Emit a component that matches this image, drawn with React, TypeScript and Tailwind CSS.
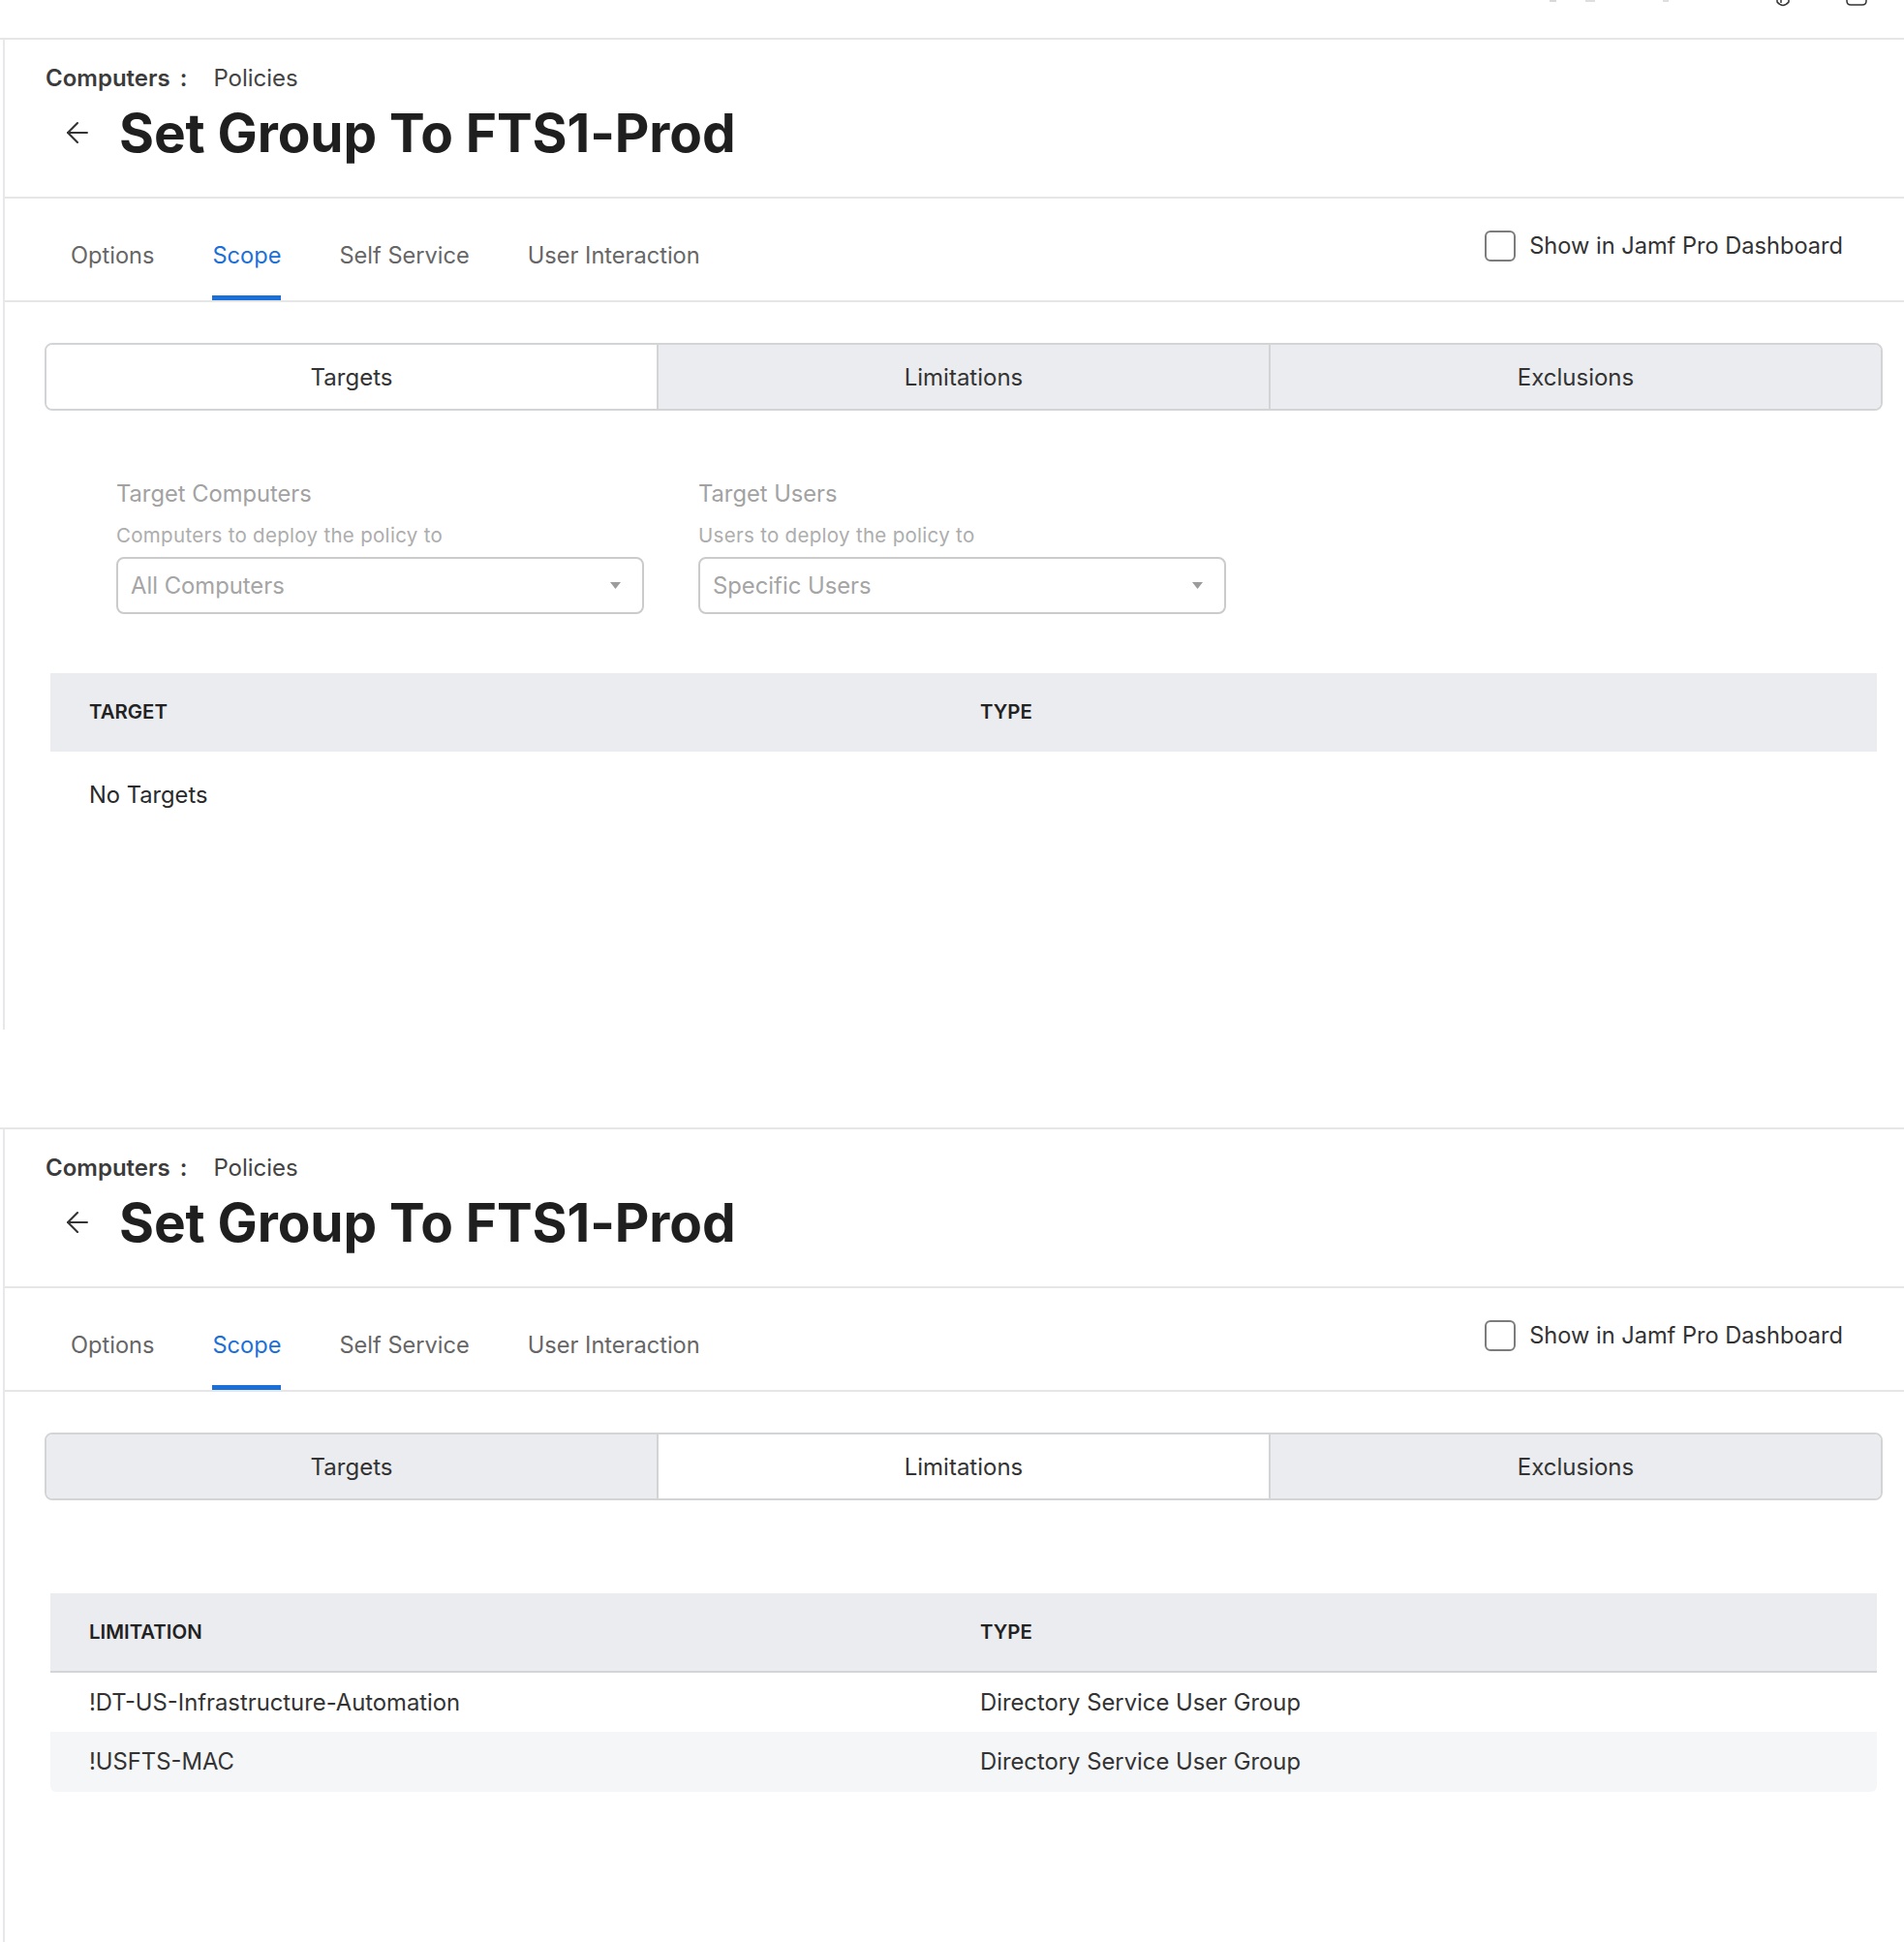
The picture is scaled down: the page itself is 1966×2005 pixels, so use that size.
import React from 'react';
import { ArrowLeft } from 'lucide-react';

type Segment = 'Targets' | 'Limitations' | 'Exclusions';

interface Row {
  name: string;
  type: string;
}

const tabs = ['Options', 'Scope', 'Self Service', 'User Interaction'];
const segments: Segment[] = ['Targets', 'Limitations', 'Exclusions'];

const limitations: Row[] = [
  { name: '!DT-US-Infrastructure-Automation', type: 'Directory Service User Group' },
  { name: '!USFTS-MAC', type: 'Directory Service User Group' },
];

const TopBar: React.FC = () => (
  <div className="flex h-[39px] items-start">
    <div className="ml-[1600px] h-[2px] w-[7px] bg-[#d8d8d8]" />
    <div className="ml-[30px] h-[2px] w-[10px] bg-[#dedede]" />
    <div className="ml-[70px] h-[2px] w-[6px] bg-[#dedede]" />
    <svg className="ml-[110px]" width="16" height="7" viewBox="0 0 16 7" fill="none">
      <path d="M2 0 V2 Q8 9 14 2 V0" stroke="#333" strokeWidth="1.5" />
      <path d="M6 0 V3" stroke="#333" strokeWidth="1.5" />
    </svg>
    <svg className="ml-[56px]" width="24" height="7" viewBox="0 0 24 7" fill="none">
      <path d="M2 0 V1 Q2 5 6 5 H18 Q22 5 22 1 V0" stroke="#333" strokeWidth="1.5" />
    </svg>
  </div>
);

const Field: React.FC<{ label: string; hint: string; value: string }> = ({ label, hint, value }) => (
  <div className="w-[545px]">
    <div className="text-[23.7px] leading-[28px] text-[#a2a2a2]">{label}</div>
    <div className="mt-[17px] text-[20.5px] leading-[24px] tracking-[0.3px] text-[#adadad]">{hint}</div>
    <div className="mt-[10px] flex h-[59px] items-center justify-between rounded-[8px] border-2 border-[#cbcbcb] pl-[13px] pr-[22px]">
      <span className="text-[23.8px] text-[#a5a5a5]">{value}</span>
      <svg width="11" height="7" viewBox="0 0 11 7">
        <path d="M0 0 H11 L5.5 7 Z" fill="#9c9c9c" />
      </svg>
    </div>
  </div>
);

const Panel: React.FC<{ active: Segment; last?: boolean }> = ({ active, last }) => (
  <section className={`border-t-2 border-[#e6e6e6] ${last ? 'mt-[101px]' : ''}`}>
    <div className={`ml-[3px] border-l-2 border-[#e7e8ea] ${last ? 'h-[839px]' : 'h-[1022px]'}`}>
      {/* page header */}
      <header className="h-[164px] border-b-2 border-[#e6e6e6] pl-[42px] pt-[26px]">
        <div className="flex h-[28px] items-center text-[24px] leading-[28px] text-[#3b3b3b]">
          <span className="font-semibold">Computers</span>
          <span className="ml-[10px] font-semibold">:</span>
          <span className="ml-[27px] text-[#444]">Policies</span>
        </div>
        <div className="mt-[10px] flex h-[64px] items-center">
          <ArrowLeft className="ml-[16px]" size={34} strokeWidth={1.5} color="#333" />
          <h1 className="ml-[26px] text-[55px] font-bold leading-[64px] tracking-[-0.1px] text-[#1f1f1f]">
            Set Group To FTS1-Prod
          </h1>
        </div>
      </header>

      {/* tabs */}
      <div className="flex h-[107px] border-b-2 border-[#e6e6e6] pl-[68px] pr-[63px]">
        <div className="flex gap-[60px]">
          {tabs.map(tab => (
            <div key={tab} className="relative flex h-full items-center pt-[12px]">
              <span className={`text-[23.6px] ${tab === 'Scope' ? 'text-[#1b6fd8]' : 'text-[#666]'}`}>{tab}</span>
              {tab === 'Scope' && <div className="absolute bottom-0 left-0 right-0 h-[5px] bg-[#1b6fd8]" />}
            </div>
          ))}
        </div>
        <div className="ml-auto flex items-start pt-[33px]">
          <div className="h-[32px] w-[32px] rounded-[6px] border-2 border-[#7c7c7c]" />
          <span className="ml-[14px] text-[23.6px] leading-[32px] text-[#333]">Show in Jamf Pro Dashboard</span>
        </div>
      </div>

      {/* segmented control */}
      <div className="ml-[41px] mr-[22px] mt-[42px] flex h-[70px] overflow-hidden rounded-[8px] border-2 border-[#d3d4d6]">
        {segments.map((seg, i) => (
          <div
            key={seg}
            className={`flex flex-1 items-center justify-center pt-[2px] text-[24px] text-[#333] ${
              i > 0 ? 'border-l-2 border-[#d3d4d6]' : ''
            } ${seg === active ? 'bg-white' : 'bg-[#ebecef]'}`}
          >
            {seg}
          </div>
        ))}
      </div>

      {active === 'Targets' ? (
        <>
          <div className="ml-[115px] mt-[72px] flex gap-[56px]">
            <Field label="Target Computers" hint="Computers to deploy the policy to" value="All Computers" />
            <Field label="Target Users" hint="Users to deploy the policy to" value="Specific Users" />
          </div>
          <div className="ml-[47px] mr-[28px] mt-[61px]">
            <div className="flex h-[81px] items-center bg-[#ebecf0] pl-[40px] text-[20.4px] font-semibold text-[#222]">
              <div className="w-[920px]">TARGET</div>
              <div>TYPE</div>
            </div>
            <div className="pl-[40px] pt-[31px] text-[23.7px] leading-[28px] text-[#2a2a2a]">No Targets</div>
          </div>
        </>
      ) : (
        <div className="ml-[47px] mr-[28px] mt-[96px]">
          <div className="flex h-[82px] items-center border-b-2 border-[#d4d5d8] bg-[#ebecf0] pl-[40px] text-[20.4px] font-semibold text-[#222]">
            <div className="w-[920px]">LIMITATION</div>
            <div>TYPE</div>
          </div>
          {limitations.map((row, i) => (
            <div
              key={row.name}
              className={`flex items-center pl-[40px] text-[23.8px] text-[#333] ${
                i % 2 === 1 ? 'h-[62px] rounded-b-[6px] bg-[#f5f6f8]' : 'h-[61px]'
              }`}
            >
              <div className="w-[920px]">{row.name}</div>
              <div>{row.type}</div>
            </div>
          ))}
        </div>
      )}
    </div>
  </section>
);

export default function App() {
  return (
    <div className="h-[2005px] w-[1966px] overflow-hidden bg-white font-['Inter',sans-serif]">
      <TopBar />
      <Panel active="Targets" />
      <Panel active="Limitations" last />
    </div>
  );
}
